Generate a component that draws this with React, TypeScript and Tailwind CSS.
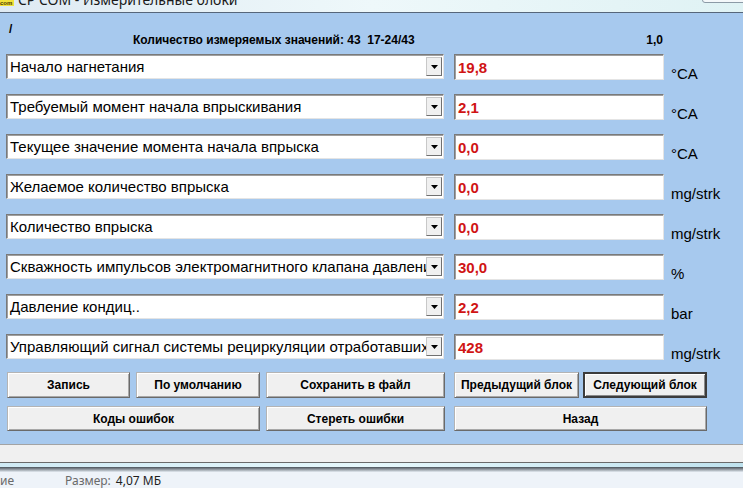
import React from 'react';

const rows = [
  { name: 'Начало нагнетания', value: '19,8', unit: '°CA' },
  { name: 'Требуемый момент начала впрыскивания', value: '2,1', unit: '°CA' },
  { name: 'Текущее значение момента начала впрыска', value: '0,0', unit: '°CA' },
  { name: 'Желаемое количество впрыска', value: '0,0', unit: 'mg/strk' },
  { name: 'Количество впрыска', value: '0,0', unit: 'mg/strk' },
  { name: 'Скважность импульсов электромагнитного клапана давления', value: '30,0', unit: '%' },
  { name: 'Давление кондиц..', value: '2,2', unit: 'bar' },
  { name: 'Управляющий сигнал системы рециркуляции отработавших газов', value: '428', unit: 'mg/strk' },
];

function Btn({ label, w, active }: { label: string; w: string; active?: boolean }) {
  return (
    <button
      className={
        (active
          ? 'border-2 border-[#3c3c3c] shadow-[inset_1px_1px_0_#ffffff,inset_-1px_-1px_0_#8a8a8a] '
          : 'border border-[#b4b4b4] border-r-[#6a6a6a] border-b-[#6a6a6a] shadow-[inset_1px_1px_0_#ffffff,inset_-1px_-1px_0_#a8a8a8] ') +
        w +
        ' h-full bg-[#f0f0f0] text-[12px] font-bold text-black flex items-center justify-center'
      }
    >
      {label}
    </button>
  );
}

export default function App() {
  return (
    <div className="w-[743px] h-[488px] overflow-hidden flex flex-col font-['Liberation_Sans',Arial,sans-serif] bg-[#a7c9ee]">
      {/* window title, mostly cut off */}
      <div className="relative h-[12px] overflow-hidden bg-gradient-to-r from-[#dfeaf3] via-[#eef8fa] to-[#dff2f4]">
        <div className="absolute left-0 top-0 w-[14px] h-[6px] bg-[#f2e23a] text-[6px] leading-[6px] font-bold text-[#4a3a00] overflow-hidden">
          com
        </div>
        <div className="absolute left-[18px] top-[-8px] text-[14px] leading-[16px] text-[#1a1a1a] font-['Noto_Sans',sans-serif]">
          CP COM - Измерительные блоки
        </div>
        <div className="absolute left-[702px] top-[-8px] w-[50px] h-[11px] rounded-[3px] border border-[#8c9aa6] bg-[#f4f8fa]"></div>
      </div>
      <div className="h-px bg-[#56667a]"></div>

      {/* main panel */}
      <div className="h-[431px] px-[6px] flex flex-col">
        <div className="h-[10px] mt-[10px] pl-[3px] text-[12px] leading-[12px] font-bold text-black">/</div>
        <div className="flex w-[657px] h-[14px] text-[12px] leading-[14px] font-bold text-black">
          <span className="pl-[127px]">Количество измеряемых значений: 43&nbsp;&nbsp;17-24/43</span>
          <span className="ml-auto">1,0</span>
        </div>

        <div className="flex flex-col gap-[15px] mt-[7px]">
          {rows.map((r) => (
            <div key={r.name} className="flex items-start h-[25px]">
              <div className="w-[438px] h-[25px] bg-white border border-[#7a7a7a] border-r-[#e4e4e4] border-b-[#e4e4e4] shadow-[inset_1px_1px_0_#a0a0a0] flex items-center">
                <div className="flex-1 overflow-hidden whitespace-nowrap pl-[3px] text-[15px] leading-[17px] text-black">
                  {r.name}
                </div>
                <div className="w-[16px] h-[19px] mr-[1px] bg-[#f0f0f0] border border-[#c8c8c8] border-r-[#707070] border-b-[#707070] flex items-center justify-center">
                  <svg width="7" height="4" viewBox="0 0 7 4">
                    <path d="M0 0h7L3.5 4z" fill="#000" />
                  </svg>
                </div>
              </div>
              <div className="ml-[10px] w-[210px] h-[26px] bg-white border border-[#7a7a7a] border-r-[#e4e4e4] border-b-[#e4e4e4] shadow-[inset_1px_1px_0_#a0a0a0] flex items-start pt-[4px] pl-[3px] text-[15px] leading-[17px] font-bold text-[#d01414]">
                {r.value}
              </div>
              <div className="ml-[7px] mt-[11px] text-[15px] leading-[17px] text-black">{r.unit}</div>
            </div>
          ))}
        </div>

        <div className="flex h-[26px] mt-[13px] pl-[1px]">
          <Btn label="Запись" w="w-[123px]" />
          <div className="w-[6px]" />
          <Btn label="По умолчанию" w="w-[124px]" />
          <div className="w-[6px]" />
          <Btn label="Сохранить в файл" w="w-[179px]" />
          <div className="w-[9px]" />
          <Btn label="Предыдущий блок" w="w-[125px]" />
          <div className="w-[4px]" />
          <Btn label="Следующий блок" w="w-[124px]" active />
        </div>
        <div className="flex h-[25px] mt-[8px] pl-[1px]">
          <Btn label="Коды ошибок" w="w-[253px]" />
          <div className="w-[6px]" />
          <Btn label="Стереть ошибки" w="w-[179px]" />
          <div className="w-[9px]" />
          <Btn label="Назад" w="w-[253px]" />
        </div>
      </div>

      {/* window bottom / explorer status */}
      <div className="h-px bg-[#a3a3a3]"></div>
      <div className="h-[17px] bg-[#f0f0f0]"></div>
      <div className="h-px bg-[#6a6a6a]"></div>
      <div className="h-[4px] bg-gradient-to-r from-[#cfeaf4] via-[#e6f8fc] to-[#bfe2ee]"></div>
      <div className="h-[5px] bg-gradient-to-b from-[#4a525a] to-[#e4ebf2]"></div>
      <div className="flex-1 bg-[#eef3f9] flex items-start pt-[2px] text-[12px] leading-[14px] text-[#6a6a6a] font-['Noto_Sans',sans-serif]">
        <span className="pl-0 w-[65px]">ие</span>
        <span>Размер:</span>
        <span className="ml-[5px] text-[#1e1e1e]">4,07 МБ</span>
      </div>
    </div>
  );
}
